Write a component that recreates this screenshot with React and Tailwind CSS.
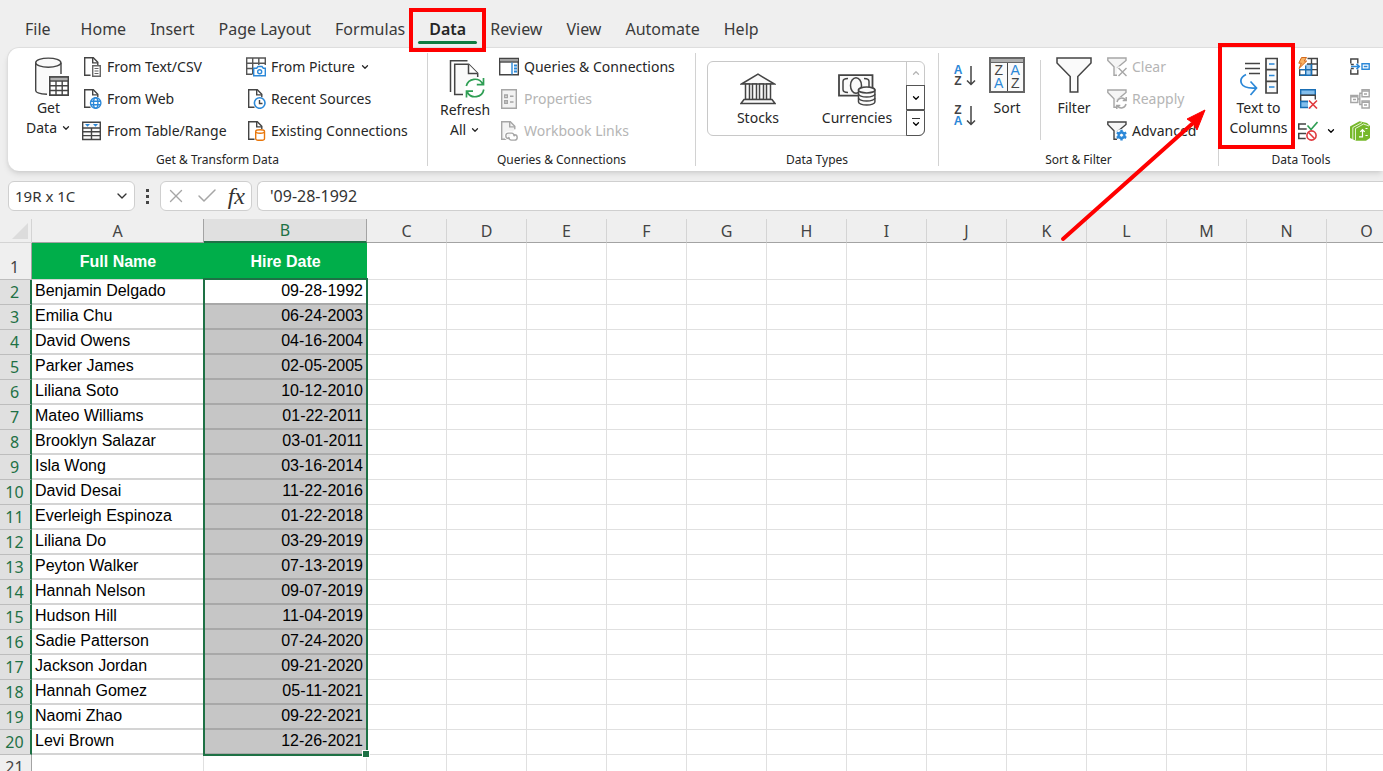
import { ChevronDown, ChevronUp, X, Check } from 'lucide-react'

const INK = '#444444'
const BLUE = '#2b88d8'
const MUTED = '#a6a6a6'

const TABS = ['File', 'Home', 'Insert', 'Page Layout', 'Formulas', 'Data', 'Review', 'View', 'Automate', 'Help']

const COLUMNS = ['C', 'D', 'E', 'F', 'G', 'H', 'I', 'J', 'K', 'L', 'M', 'N', 'O']

const EMPLOYEES = [
  { name: 'Benjamin Delgado', date: '09-28-1992' },
  { name: 'Emilia Chu', date: '06-24-2003' },
  { name: 'David Owens', date: '04-16-2004' },
  { name: 'Parker James', date: '02-05-2005' },
  { name: 'Liliana Soto', date: '10-12-2010' },
  { name: 'Mateo Williams', date: '01-22-2011' },
  { name: 'Brooklyn Salazar', date: '03-01-2011' },
  { name: 'Isla Wong', date: '03-16-2014' },
  { name: 'David Desai', date: '11-22-2016' },
  { name: 'Everleigh Espinoza', date: '01-22-2018' },
  { name: 'Liliana Do', date: '03-29-2019' },
  { name: 'Peyton Walker', date: '07-13-2019' },
  { name: 'Hannah Nelson', date: '09-07-2019' },
  { name: 'Hudson Hill', date: '11-04-2019' },
  { name: 'Sadie Patterson', date: '07-24-2020' },
  { name: 'Jackson Jordan', date: '09-21-2020' },
  { name: 'Hannah Gomez', date: '05-11-2021' },
  { name: 'Naomi Zhao', date: '09-22-2021' },
  { name: 'Levi Brown', date: '12-26-2021' },
]

/* ---------- icons ---------- */

function SmallIcon({ children, color = INK }) {
  return (
    <svg width="20" height="20" viewBox="0 0 20 20" fill="none" stroke={color} strokeWidth="1.4" className="shrink-0">
      {children}
    </svg>
  )
}

// Dog-eared page, the lower right corner is left open for a badge
function PageShape({ fill = 'none' }) {
  return (
    <>
      <path d="M8.5 18.3H2.7V.7h8.6l4.5 4.5v3" fill={fill} />
      <path d="M10.7.7v5.2h5.1" />
    </>
  )
}

function TextCsvIcon() {
  return (
    <SmallIcon>
      <PageShape />
      <path d="M10.7 8.7h7.6v10.6h-7.6z" fill="#fff" stroke="#666" />
      <path d="M12.5 11.5h4M12.5 14h4M12.5 16.5h4" stroke="#666" strokeWidth="1.2" />
    </SmallIcon>
  )
}

function WebIcon() {
  return (
    <SmallIcon>
      <PageShape />
      <circle cx="13.7" cy="14" r="5.2" fill="#fff" stroke={BLUE} />
      <ellipse cx="13.7" cy="14" rx="2.2" ry="5.2" stroke={BLUE} />
      <path d="M8.8 12.2h9.8M8.8 15.8h9.8" stroke={BLUE} />
    </SmallIcon>
  )
}

function TableRangeIcon() {
  return (
    <SmallIcon>
      <path d="M.7 1.2h17.6v17.3H.7z" fill="#fafafa" />
      <path d="M.7 7h17.6M.7 10.8h17.6M.7 14.6h17.6M9.5 7v11.5" />
      <path d="M3 3h5L5.5 5.8zM11 3h5l-2.5 2.8z" fill={BLUE} stroke="none" />
    </SmallIcon>
  )
}

function PictureIcon() {
  return (
    <SmallIcon>
      <path d="M6.5 17.3H.7V1h18.6v7M.7 6.3h18.6M.7 11.5h6M6.7 1v16M12.8 1v7" stroke="#555" />
      <path d="M7.7 11.2h3l1.3-1.7h4l1.3 1.7h2v7.6H7.7z" fill="#fff" stroke={BLUE} />
      <circle cx="13.7" cy="14.8" r="2" stroke={BLUE} />
    </SmallIcon>
  )
}

function RecentIcon() {
  return (
    <SmallIcon>
      <PageShape />
      <circle cx="13.7" cy="14" r="5.3" fill="#fff" stroke={BLUE} strokeWidth="1.6" />
      <path d="M13.5 11v3.5h3" />
    </SmallIcon>
  )
}

function ExistingIcon() {
  return (
    <SmallIcon>
      <PageShape />
      <path d="M9.7 10.7v7c0 .9 2 1.6 4.4 1.6s4.400-.7 4.400-1.600v-7" fill="#fff" stroke="#e8760a" />
      <ellipse cx="14.1" cy="10.5" rx="4.4" ry="1.7" fill="#fff" stroke="#e8760a" />
    </SmallIcon>
  )
}

function QueriesIcon() {
  return (
    <SmallIcon>
      <path d="M.7 1.5h18.6v16.3H.7z" />
      <path d="M1 2h18v2.6H1z" fill="#a0a0a0" stroke="none" />
      <path d="M.7 5h18.6" />
      <path d="M13 5.5v12" stroke={BLUE} />
      <path d="M15 8.500h3M15 11.500h3M15 14.500h3" stroke={BLUE} strokeWidth="1.8" />
    </SmallIcon>
  )
}

function PropertiesIcon() {
  return (
    <SmallIcon color={MUTED}>
      <path d="M2.7.7h14.6v18.6H2.7z" fill="#f3f3f3" />
      <path d="M5.7 6h2.6v2.6H5.7zM5.7 11.7h2.6v2.6H5.7zM11 7.300h3.500M11 13h3.500" />
    </SmallIcon>
  )
}

function LinksIcon() {
  return (
    <SmallIcon color={MUTED}>
      <PageShape fill="#f3f3f3" />
      <path d="M11 17.8H9.500a3 3 0 0 1 0-6h3a3 3 0 0 1 2.800 3.600M13.500 13h1.700a3 3 0 0 1 0 6h-3a3 3 0 0 1-2.700-3.800" stroke="#fff" strokeWidth="3" />
      <path d="M11 17.500H9.500a2.700 2.700 0 0 1 0-5.400h3a2.700 2.700 0 0 1 2.600 3.300M14 13.700h1.500a2.700 2.700 0 0 1 0 5.400h-3a2.700 2.700 0 0 1-2.600-3.300" />
    </SmallIcon>
  )
}

function FunnelShape({ fill = '#f5f5f5' }) {
  return <path d="M10 11l9-7.500V1H.8v2.500l6.200 6.300v8.500h3" fill={fill} />
}

function ClearIcon() {
  return (
    <SmallIcon color={MUTED}>
      <FunnelShape />
      <path d="M10.500 9.500h10v10h-10z" fill="#fff" stroke="none" />
      <path d="M11.500 11l8 8M19.500 11l-8 8" />
    </SmallIcon>
  )
}

function ReapplyIcon() {
  return (
    <SmallIcon color={MUTED}>
      <FunnelShape />
      <circle cx="14.5" cy="14" r="6" fill="#fff" stroke="none" />
      <path d="M10 13a4.800 4.800 0 0 1 8.500-2M19.200 8v3.500h-3.500M19 15a4.800 4.800 0 0 1-8.500 2M9.800 20v-3.500h3.500" strokeWidth="1.5" />
    </SmallIcon>
  )
}

function AdvancedIcon() {
  return (
    <SmallIcon>
      <FunnelShape />
      <circle cx="14.5" cy="14" r="6" fill="#fff" stroke="none" />
      <circle cx="14.5" cy="14.2" r="4" fill={BLUE} stroke="none" />
      <path d="M14.500 8.800v10.800M9.800 11.500l9.400 5.400M19.200 11.500l-9.400 5.400" stroke={BLUE} strokeWidth="2.4" />
      <circle cx="14.5" cy="14.2" r="2" fill="#fff" stroke={BLUE} strokeWidth="1" />
    </SmallIcon>
  )
}

function FlashFillIcon() {
  return (
    <SmallIcon>
      <path d="M9.500 1.500h9.800v16.800H1.700v-6" />
      <path d="M7.700 7h5.800v11.200H7.700z" fill="#9fcdf2" stroke="none" />
      <path d="M9 7h10.300M1.700 12.600h17.600M13.500 1.500v16.800" />
      <path d="M7.700 18.200V8.500M13.500 7v11.200M1.700 12.600h11.800M1.700 18.200h11.800" stroke="#1a6fb5" />
      <path d="M3.500.5h5L6.300 4h2.400L1 11.500l2.300-5.300H.8z" fill="#f9b262" stroke="#d2691e" strokeWidth="1" />
    </SmallIcon>
  )
}

function DuplicatesIcon() {
  return (
    <SmallIcon>
      <path d="M2.700.7h14.600v5.600H2.700z" fill="#83beec" stroke="#1a6fb5" />
      <path d="M2.700 6.300h14.600v6.200H2.700z" fill="#fff" />
      <path d="M2.700 12.500H10l2.500 6H2.700z" fill="#83beec" stroke="#1a6fb5" />
      <path d="M10 10.500h10v9H10z" fill="#fff" stroke="none" />
      <path d="M11 11.500l8 8M19 11.500l-8 8" stroke="#e0393e" strokeWidth="1.6" />
    </SmallIcon>
  )
}

function ValidationIcon() {
  return (
    <SmallIcon>
      <path d="M8 3H.7v5h8M8 12.500H.7v5h7" strokeWidth="1.6" />
      <path d="M9.500 4.500l3.500 4 6.500-7.500" stroke="#2f9e54" strokeWidth="1.6" />
      <circle cx="13.5" cy="14.5" r="4.6" stroke="#e0393e" strokeWidth="1.6" />
      <path d="M10.300 11.300l6.400 6.400" stroke="#e0393e" strokeWidth="1.6" />
    </SmallIcon>
  )
}

function ConsolidateIcon() {
  return (
    <SmallIcon>
      <path d="M.8 6.500V2h7v4.500M.8 12.500V17h7v-4.500M.8 7.500h3M.8 11.500h3" />
      <path d="M1 9.500h8M6.500 6.800l2.800 2.700-2.800 2.700" stroke={BLUE} strokeWidth="1.6" />
      <path d="M12 6.700h7.200v5.600H12zM13.800 9.500h3.600" stroke={BLUE} />
    </SmallIcon>
  )
}

function RelationshipsIcon() {
  return (
    <SmallIcon color={MUTED}>
      <path d="M.8 6.500h7v7h-7zM12 .8h7.200v7H12zM12 12h7.200v7H12zM7.800 10h2V4.300H12M9.800 10v5.500H12" />
      <path d="M1 7.700h6.500M12 2h7M12 13.200h7M3 10.500h3M14 5h3M14 16h3" strokeWidth="1.5" />
    </SmallIcon>
  )
}

function DataModelIcon() {
  return (
    <SmallIcon color="#fff">
      <path d="M0 5.500L9.500.3 17 2l3 3v12l-4 2.700H6L0 17z" fill="#76b82a" stroke="none" />
      <path d="M2.800 18.500V6.500L12 1.500M5.500 19.500V7.500l8-4.500 5.500 2" strokeWidth=".8" />
      <path d="M9 15.800h3.500V9M10.300 10.800L12.500 8.600l2.200 2.200M17.500 7.500h-2M15.500 14.500h2.200" strokeWidth="1.2" />
    </SmallIcon>
  )
}

function GetDataIcon() {
  return (
    <svg width="36" height="40" viewBox="0 0 36 40" fill="none" stroke={INK} strokeWidth="1.4">
      <path d="M1.700 6v28c0 2.200 5.500 4 12.300 4V20h13V6" fill="#fafafa" stroke="none" />
      <path d="M13 37.300C6.500 37 1.700 35.500 1.700 33.500V5.700M27 5.700V17" />
      <ellipse cx="14.3" cy="5.7" rx="12.6" ry="4.6" fill="#fafafa" />
      <path d="M15.700 20h18.600v18.300H15.700z" fill="#fff" />
      <path d="M16 20h18v3.500H16z" fill="#b0b0b0" stroke="none" />
      <path d="M15.700 24h18.600M15.700 28.700h18.600M15.700 33.500h18.600M22 24v14M28.200 24v14M15.700 20h18.600v18.300H15.700z" />
    </svg>
  )
}

function RefreshIcon() {
  return (
    <svg width="36" height="40" viewBox="0 0 36 40" fill="none" stroke={INK} strokeWidth="1.5">
      <path d="M1.500 33V1.700h17" />
      <path d="M14 35.500H5.700V5.200h14l9 9V18" fill="#fafafa" />
      <path d="M19.500 5.200v9.300h9.200" fill="#fff" />
      <circle cx="26" cy="29" r="10.5" fill="#fff" stroke="none" />
      <path d="M17.300 27a8.900 8.900 0 0 1 16.500-2M34.500 19v6.700h-6.700M34.800 30.500a8.900 8.900 0 0 1-16.600 2.500M17.500 38.500v-6.300h6.500" stroke="#2f9e54" strokeWidth="1.7" />
    </svg>
  )
}

function StocksIcon() {
  return (
    <svg width="36" height="34" viewBox="0 0 36 34" fill="#fafafa" stroke={INK} strokeWidth="1.5">
      <path d="M1.500 12L18 2.200 34.500 12z" />
      <path d="M5.500 12h4v15.500h-4zM12.500 12h4v15.500h-4zM19.500 12h4v15.500h-4zM26.500 12h4v15.500h-4z" />
      <path d="M1 31.500h34l-3-4H4z" />
    </svg>
  )
}

function CurrenciesIcon() {
  return (
    <svg width="38" height="34" viewBox="0 0 38 34" fill="#fafafa" stroke={INK} strokeWidth="1.5">
      <path d="M1 3.200h33.500v20.500H1z" strokeWidth="1.8" />
      <path d="M10 6.500c-3.500 0-5 .5-5 3v8c0 2.500 1.500 3 5 3M26 6.500c3.500 0 5 .5 5 3v6" fill="none" />
      <ellipse cx="18" cy="13.5" rx="5.5" ry="7.7" fill="none" />
      <path d="M20.500 18v12c0 1.600 3.600 3 8.200 3s8.200-1.400 8.200-3V18z" />
      <ellipse cx="28.7" cy="18" rx="8.2" ry="2.9" />
      <path d="M20.500 22c0 1.600 3.600 3 8.200 3s8.200-1.400 8.200-3M20.500 26c0 1.600 3.600 3 8.200 3s8.200-1.400 8.200-3" fill="none" />
    </svg>
  )
}

function LetterPair({ first, second, className }) {
  return (
    <span className={className}>
      <span className={first === 'A' ? 'text-[#2b88d8]' : 'text-[#444444]'}>{first}</span>
      <span className={second === 'A' ? 'text-[#2b88d8]' : 'text-[#444444]'}>{second}</span>
    </span>
  )
}

function SortButton({ first, second, label }) {
  return (
    <button type="button" aria-label={label} className="flex h-6 items-center gap-1">
      <LetterPair first={first} second={second} className="flex w-2 flex-col items-center font-['Liberation_Sans',sans-serif] text-xs leading-[11px] font-bold" />
      <svg width="10" height="20" viewBox="0 0 10 20" fill="none" stroke={INK} strokeWidth="1.5">
        <path d="M5 0v18.500M1 14.500l4 4 4-4" />
      </svg>
    </button>
  )
}

function SortIcon() {
  return (
    <span className="flex h-9 w-9 flex-col border-2 border-[#666666] bg-[#fafafa]">
      <span className="h-1 border-b border-[#666666] bg-[#b0b0b0]" />
      <span className="flex flex-1 divide-x divide-[#444444]">
        <LetterPair first="Z" second="A" className="flex flex-1 flex-col items-center justify-center font-['Liberation_Sans',sans-serif] text-sm leading-[13px]" />
        <LetterPair first="A" second="Z" className="flex flex-1 flex-col items-center justify-center font-['Liberation_Sans',sans-serif] text-sm leading-[13px]" />
      </span>
    </span>
  )
}

function FilterIcon() {
  return (
    <svg width="36" height="36" viewBox="0 0 36 36" fill="#fafafa" stroke={INK} strokeWidth="1.5">
      <path d="M1 1h34v5L21.800 19.500V35h-7.600V19.500L1 6z" />
    </svg>
  )
}

function TextToColumnsIcon() {
  return (
    <svg width="38" height="40" viewBox="0 0 38 40" fill="none" stroke={INK} strokeWidth="1.5">
      <path d="M5 6.500h15M5 11.500h15M9 16.500h11" />
      <path d="M26 1.500h11.300v34.500H26zM26 12.700h11.300M26 24.300h11.300" fill="#fafafa" strokeWidth="1.7" />
      <path d="M29 7h5.500M29 18.500h5.500M29 30h5.500" stroke={BLUE} strokeWidth="1.7" />
      <path d="M6 17.500C1 20 .2 23.500 1.500 26.500c1.500 3.500 5 5 14 4.500M10.500 24.500l6 6.500-6 7" stroke={BLUE} strokeWidth="1.7" />
    </svg>
  )
}

/* ---------- ribbon ---------- */

function SmallButton({ icon, label, disabled = false, menu = false }) {
  return (
    <button
      type="button"
      disabled={disabled}
      className="flex h-8 items-center gap-[5px] text-sm whitespace-nowrap text-[#262626] disabled:text-[#b5b5b5]"
    >
      {icon}
      <span>{label}</span>
      {menu && <ChevronDown size={10} strokeWidth={3} />}
    </button>
  )
}

function BigButton({ icon, lines, menu = false }) {
  return (
    <button type="button" className="flex flex-col items-center text-sm leading-5 whitespace-nowrap text-[#262626]">
      <span className="flex h-[41px] items-start justify-center">{icon}</span>
      {lines.map((line, i) => (
        <span key={line} className="flex items-center gap-1">
          {line}
          {menu && i === lines.length - 1 && <ChevronDown size={10} strokeWidth={3} />}
        </span>
      ))}
    </button>
  )
}

function Group({ label, className, children }) {
  return (
    <section aria-label={label} className={`my-[5px] flex flex-col ${className}`}>
      <div className="relative -mt-[2px] flex h-24 shrink-0">{children}</div>
      <p className="mt-[3px] text-center text-xs leading-5 text-[#262626]">{label}</p>
    </section>
  )
}

function Ribbon() {
  return (
    <div className="ml-[7px] flex h-[124px] rounded-l-xl border-t border-l border-[#dedede] bg-white shadow-md">
      <Group label="Get &amp; Transform Data" className="w-[420px] shrink-0 border-r border-[#d2d2d2]">
        <div className="w-[74px] shrink-0 pt-[6px] pl-[18px]">
          <BigButton icon={<span className="pl-2"><GetDataIcon /></span>} lines={['Get', 'Data']} menu />
        </div>
        <div className="w-[164px] shrink-0">
          <SmallButton icon={<TextCsvIcon />} label="From Text/CSV" />
          <SmallButton icon={<WebIcon />} label="From Web" />
          <SmallButton icon={<TableRangeIcon />} label="From Table/Range" />
        </div>
        <div>
          <SmallButton icon={<PictureIcon />} label="From Picture" menu />
          <SmallButton icon={<RecentIcon />} label="Recent Sources" />
          <SmallButton icon={<ExistingIcon />} label="Existing Connections" />
        </div>
      </Group>

      <Group label="Queries &amp; Connections" className="w-[268px] shrink-0 border-r border-[#d2d2d2]">
        <div className="w-[71px] shrink-0 pt-2 pl-3">
          <BigButton icon={<span className="pl-1"><RefreshIcon /></span>} lines={['Refresh', 'All']} menu />
        </div>
        <div>
          <SmallButton icon={<QueriesIcon />} label="Queries &amp; Connections" />
          <SmallButton icon={<PropertiesIcon />} label="Properties" disabled />
          <SmallButton icon={<LinksIcon />} label="Workbook Links" disabled />
        </div>
      </Group>

      <Group label="Data Types" className="w-[243px] shrink-0 border-r border-[#d2d2d2]">
        <div className="mt-[10px] ml-[11px] flex h-[75px] w-[218px] rounded-md border border-[#c8c8c8]">
          <div className="flex flex-1 items-start pt-[10px]">
            <div className="flex w-[100px] justify-center">
              <button type="button" className="flex flex-col items-center text-sm text-[#262626]">
                <span className="h-9"><StocksIcon /></span>
                <span>Stocks</span>
              </button>
            </div>
            <div className="flex flex-1 justify-center">
              <button type="button" className="flex flex-col items-center text-sm text-[#262626]">
                <span className="h-9"><CurrenciesIcon /></span>
                <span>Currencies</span>
              </button>
            </div>
          </div>
          <div className="-my-px -mr-px flex w-[19px] flex-col">
            <button type="button" disabled aria-label="Previous row" className="flex flex-1 items-center justify-center border-l border-[#c8c8c8] text-[#b5b5b5]">
              <ChevronUp size={10} strokeWidth={3} />
            </button>
            <button type="button" aria-label="Next row" className="flex flex-1 items-center justify-center border border-[#555555]">
              <ChevronDown size={10} strokeWidth={3} />
            </button>
            <button type="button" aria-label="More data types" className="flex flex-1 flex-col items-center justify-center rounded-br-md border border-[#555555]">
              <span className="w-2 border-t border-[#333333]" />
              <ChevronDown size={10} strokeWidth={3} />
            </button>
          </div>
        </div>
      </Group>

      <Group label="Sort &amp; Filter" className="w-[280px] shrink-0 border-r border-[#d2d2d2]">
        <div className="flex w-[50px] shrink-0 flex-col gap-4 pt-[13px] pl-[15px]">
          <SortButton first="A" second="Z" label="Sort A to Z" />
          <SortButton first="Z" second="A" label="Sort Z to A" />
        </div>
        <div className="w-[51px] shrink-0 pt-[6px]">
          <BigButton icon={<SortIcon />} lines={['Sort']} />
        </div>
        <div className="mt-[9px] h-20 w-4 shrink-0 border-l border-[#d2d2d2]" />
        <div className="w-[51px] shrink-0 pt-[6px]">
          <BigButton icon={<FilterIcon />} lines={['Filter']} />
        </div>
        <div>
          <SmallButton icon={<ClearIcon />} label="Clear" disabled />
          <SmallButton icon={<ReapplyIcon />} label="Reapply" disabled />
          <SmallButton icon={<AdvancedIcon />} label="Advanced" />
        </div>
        {/* callout arrow towards Text to Columns */}
        <svg width="150" height="140" viewBox="0 0 150 140" aria-hidden="true" className="pointer-events-none absolute top-[55px] left-[119px] z-10">
          <path d="M5 133L134 18" stroke="#ff0000" strokeWidth="4" strokeLinecap="round" />
          <path d="M147 4L139 24 135 17 129 13z" fill="#ff0000" stroke="#ff0000" />
        </svg>
      </Group>

      <Group label="Data Tools" className="min-w-[164px] flex-1">
        <div className="relative flex w-[79px] shrink-0 justify-center pt-[6px]">
          <BigButton icon={<TextToColumnsIcon />} lines={['Text to', 'Columns']} />
          <span className="pointer-events-none absolute -top-2 -left-[1px] h-[106px] w-[77px] border-4 border-[#ff0000]" />
        </div>
        <div className="w-[52px] shrink-0">
          <button type="button" aria-label="Flash Fill" className="flex h-8 items-center"><FlashFillIcon /></button>
          <button type="button" aria-label="Remove Duplicates" className="flex h-8 items-center"><DuplicatesIcon /></button>
          <button type="button" aria-label="Data Validation" className="flex h-8 items-center gap-2">
            <ValidationIcon />
            <ChevronDown size={10} strokeWidth={3} />
          </button>
        </div>
        <div>
          <button type="button" aria-label="Consolidate" className="flex h-8 items-center"><ConsolidateIcon /></button>
          <button type="button" aria-label="Relationships" className="flex h-8 items-center"><RelationshipsIcon /></button>
          <button type="button" aria-label="Manage Data Model" className="flex h-8 items-center"><DataModelIcon /></button>
        </div>
      </Group>
    </div>
  )
}

function TabBar() {
  return (
    <nav className="flex h-[47px] items-center pt-[10px] pl-[13px] text-base text-[#3a3a3a]">
      {TABS.map((tab) =>
        tab === 'Data' ? (
          <a key={tab} href="#data" aria-current="page" className="relative px-3 leading-6 font-semibold text-[#262626]">
            {tab}
            <span className="absolute inset-x-[1px] -bottom-[3px] h-[3px] rounded-full bg-[#107c41]" />
            <span className="pointer-events-none absolute -inset-x-2 -top-[9px] z-10 h-11 border-4 border-[#ff0000]" />
          </a>
        ) : (
          <a key={tab} href={`#${tab}`} className="px-3 leading-6 whitespace-nowrap first:mr-[6px]">
            {tab}
          </a>
        ),
      )}
    </nav>
  )
}

function FormulaBar() {
  return (
    <div className="mt-[10px] flex h-[30px] items-stretch pl-2 text-[#333333]">
      <div className="flex w-[127px] items-center rounded-md border border-[#cfcfcf] bg-white pr-1 pl-[6px]">
        <input aria-label="Name Box" defaultValue="19R x 1C" className="w-full min-w-0 bg-transparent text-[15px] outline-none" />
        <ChevronDown size={16} strokeWidth={2} className="shrink-0" />
      </div>
      <div className="flex w-[25px] flex-col items-center justify-center gap-[3px]">
        <span className="h-[3px] w-[3px] bg-[#444444]" />
        <span className="h-[3px] w-[3px] bg-[#444444]" />
        <span className="h-[3px] w-[3px] bg-[#444444]" />
      </div>
      <div className="flex w-[92px] items-center justify-between rounded-md border border-[#cfcfcf] bg-white px-1">
        <button type="button" aria-label="Cancel" className="text-[#a6a6a6]"><X size={22} strokeWidth={1.5} /></button>
        <button type="button" aria-label="Enter" className="text-[#a6a6a6]"><Check size={24} strokeWidth={1.5} /></button>
        <button type="button" aria-label="Insert Function" className="pr-[2px] font-['Liberation_Serif',serif] text-2xl leading-7 italic">fx</button>
      </div>
      <input
        aria-label="Formula Bar"
        defaultValue="'09-28-1992"
        className="ml-[5px] min-w-0 flex-1 rounded-l-md border border-r-0 border-[#cfcfcf] bg-white pl-3 text-base outline-none"
      />
    </div>
  )
}

/* ---------- sheet ---------- */

function EmptyCells() {
  return COLUMNS.map((col) => <td key={col} className="border-r border-b border-[#e0e0e0] bg-white" />)
}

function Sheet() {
  return (
    <table className="mt-2 w-[1407px] table-fixed border-separate border-spacing-0 font-['Liberation_Sans',Arial,sans-serif] text-base text-black">
      <colgroup>
        <col className="w-8" />
        <col className="w-[172px]" />
        <col className="w-[163px]" />
        {COLUMNS.map((col) => (
          <col key={col} className="w-20" />
        ))}
      </colgroup>
      <thead className="font-['Noto_Sans',sans-serif] text-[#444444]">
        <tr className="h-6">
          <th aria-label="Select all" className="border-r border-b border-r-[#d4d4d4] border-b-[#d4d4d4] p-0">
            <svg width="16" height="16" viewBox="0 0 16 16" className="ml-3">
              <path d="M16 0v16H0z" fill="#dcdcdc" />
            </svg>
          </th>
          <th className="border-r border-b border-[#a3a3a3] p-0 leading-5 font-normal">A</th>
          <th className="border-r border-b-2 border-r-[#a3a3a3] border-b-[#1e7145] bg-[#e0e0e0] p-0 leading-5 font-normal text-[#1e7145]">B</th>
          {COLUMNS.map((col) => (
            <th key={col} className="border-r border-b border-r-[#d4d4d4] border-b-[#a3a3a3] p-0 leading-5 font-normal">{col}</th>
          ))}
        </tr>
      </thead>
      <tbody>
        <tr className="h-[37px]">
          <th className="border-r border-b border-r-[#a3a3a3] border-b-[#bdbdbd] p-0 pr-[2px] align-bottom font-['Noto_Sans',sans-serif] leading-6 font-normal text-[#444444]">1</th>
          <td className="border-b border-[#d4d4d4] bg-[#00ae4a] p-0 pt-px text-center font-bold text-white">Full Name</td>
          <td className="border-b border-[#d4d4d4] bg-[#00ae4a] p-0 pt-px text-center font-bold text-white">Hire Date</td>
          <EmptyCells />
        </tr>
        {EMPLOYEES.map(({ name, date }, i) => (
          <tr key={name} className="h-[25px]">
            <th className="border-r-2 border-b border-r-[#1e7145] border-b-[#bdbdbd] bg-[#e0e0e0] p-0 pr-[1px] align-bottom font-['Noto_Sans',sans-serif] leading-[23px] font-normal text-[#1e7145]">
              {i + 2}
            </th>
            <td className="border-b-2 border-[#d4d4d4] bg-white p-0 pt-px pl-[3px] align-top leading-5">{name}</td>
            {i === 0 ? (
              <td className="relative border-b-2 border-[#a8a8a8] bg-white p-0 pt-px pr-1 text-right align-top leading-5">
                {date}
                {/* selection frame over B2:B20 */}
                <span className="pointer-events-none absolute -top-[2px] -left-px h-[478px] w-[165px] border-2 border-[#1e7145]">
                  <span className="absolute -right-[3px] -bottom-[3px] h-[6px] w-[6px] bg-[#1e7145] outline outline-white" />
                </span>
              </td>
            ) : (
              <td className="border-b-2 border-[#a8a8a8] bg-[#c6c6c6] p-0 pt-px pr-1 text-right align-top leading-5">{date}</td>
            )}
            <EmptyCells />
          </tr>
        ))}
        <tr className="h-[25px]">
          <th className="border-r border-b border-r-[#a3a3a3] border-b-[#bdbdbd] p-0 pr-[2px] align-bottom font-['Noto_Sans',sans-serif] leading-6 font-normal text-[#444444]">21</th>
          <td className="border-r border-b border-[#e0e0e0] bg-white" />
          <td className="border-r border-b border-[#e0e0e0] bg-white" />
          <EmptyCells />
        </tr>
      </tbody>
    </table>
  )
}

export default function App() {
  return (
    <main className="h-screen overflow-hidden bg-[#efefef] font-['Noto_Sans',sans-serif]">
      <TabBar />
      <Ribbon />
      <FormulaBar />
      <Sheet />
    </main>
  )
}
